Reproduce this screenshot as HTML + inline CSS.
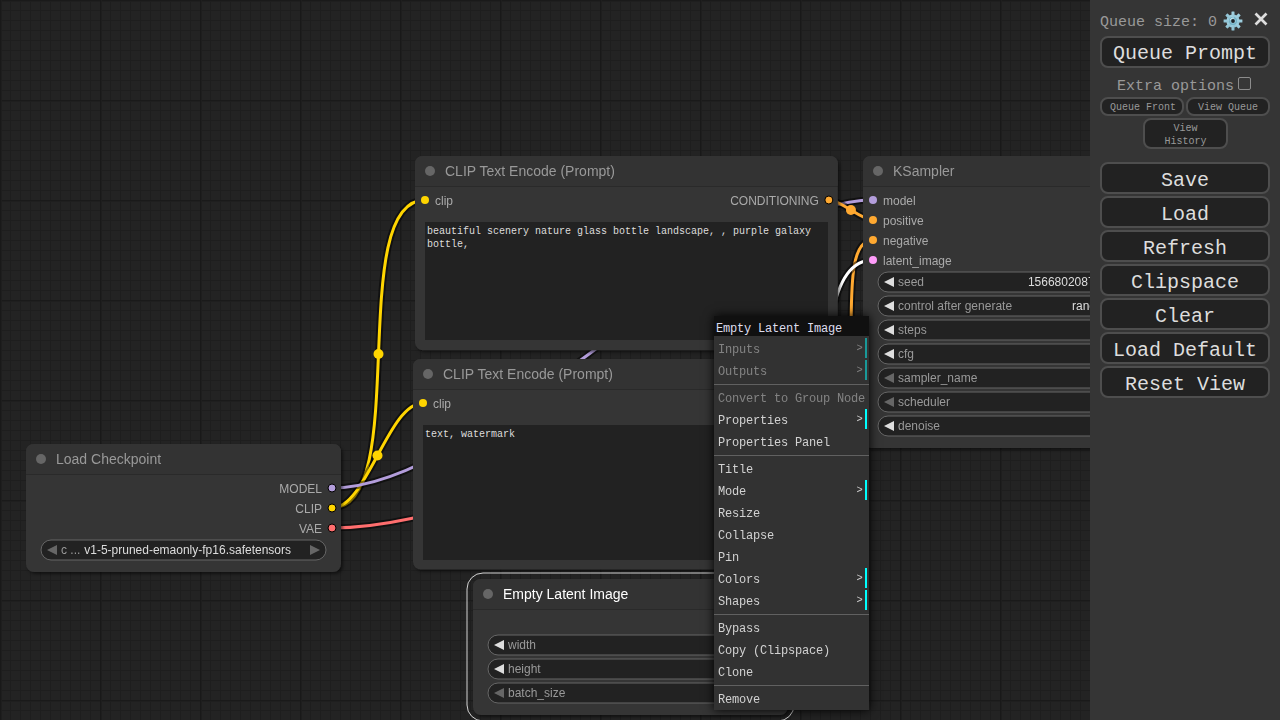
<!DOCTYPE html>
<html><head><meta charset="utf-8"><title>ComfyUI</title><style>
html,body{margin:0;padding:0;width:1280px;height:720px;overflow:hidden;background:#222}
#grid{position:absolute;left:0;top:0;width:1280px;height:720px;background-color:#232323;
background-image:
linear-gradient(to right, #191919 0, #191919 1px, #1e1e1e 1px, #1e1e1e 2px, transparent 2px),
linear-gradient(to bottom, #1a1a1a 0, #1a1a1a 1px, #1f1f1f 1px, #1f1f1f 2px, transparent 2px),
linear-gradient(to right, #1e1e1e 0, #1e1e1e 1px, transparent 1px),
linear-gradient(to bottom, #1e1e1e 0, #1e1e1e 1px, transparent 1px);
background-size:100px 100px,100px 100px,10px 10px,10px 10px;
background-position:0 0,0 0,0 0,0 0}
#cv{position:absolute;left:0;top:0;will-change:transform}
#cv text{font-family:"Liberation Sans", sans-serif}
.ta{position:absolute;background:#222;color:#ddd;font-family:"Liberation Mono", monospace;font-size:10px;line-height:13px;padding:3px 2px 2px 2px;box-sizing:border-box;overflow:hidden;word-wrap:break-word;white-space:pre-wrap}
#menu{position:absolute;left:714px;top:316px;width:155px;height:394px;background:#323232;box-shadow:0 0 10px #000;font-family:"Liberation Mono", monospace;font-size:12px;letter-spacing:-0.2px;overflow:hidden}
#menu .mt{height:20px;line-height:26.5px;background:#101010;color:#dde;padding-left:2px;white-space:nowrap}
#menu .me{position:relative;height:20px;line-height:25px;margin:2px;padding-left:2px;color:#d2d2d2;white-space:nowrap;box-sizing:border-box}
#menu .me.sub{border-right:2px solid cyan}
#menu .me.sub::after{content:">";position:absolute;right:2.3px;top:-0.9px;font-size:10.4px;letter-spacing:0;line-height:22px}
#menu .me.dis{opacity:0.5}
#menu .sep{height:0;border-top:1px solid #313131;border-bottom:1px solid #616161;margin:3px 0 2px 0}
#panel{position:absolute;left:1090px;top:0;width:190px;height:720px;background:#353535;font-family:"Liberation Mono", monospace;color:#999}
#panel .qs{position:absolute;left:10px;top:13px;font-size:15px;line-height:20px;white-space:nowrap}
#panel .gear{position:absolute;left:132.8px;top:10.5px}
#panel .close{position:absolute;left:164.4px;top:11.8px}
#panel .btn{position:absolute;box-sizing:border-box;border:2px solid #4e4e4e;background:#222;border-radius:8px;text-align:center;white-space:nowrap}
#panel .big{left:10px;width:170px;height:32px;font-size:20px;line-height:32px;color:#ddd}
#panel .big2{left:10px;width:170px;height:32px;font-size:20px;line-height:33px;color:#ddd}
#panel .sm{font-size:10px;line-height:18px;color:#999}
#panel .xo{position:absolute;left:27px;top:77.5px;font-size:15px;line-height:18px;white-space:nowrap}
#panel .cb{position:absolute;left:148px;top:77px;width:11px;height:11px;border:1px solid #8c8c8c;border-radius:2px;background:#373737}
</style></head>
<body>
<div id="grid"></div>
<svg id="cv" width="1280" height="720">
<defs><filter id="sh" x="-10%" y="-10%" width="120%" height="130%"><feDropShadow dx="2" dy="2" stdDeviation="1.5" flood-color="#000" flood-opacity="0.5"/></filter></defs>
<path d="M332 508 C412.43 508 344.57 200 425 200" stroke="rgba(0,0,0,0.5)" stroke-width="7" fill="none" stroke-linejoin="round"/>
<path d="M332 508 C412.43 508 344.57 200 425 200" stroke="#FFD500" stroke-width="3" fill="none"/>
<circle cx="378.5" cy="354" r="5" fill="#FFD500"/>
<path d="M332 508 C366.74 508 388.26 403 423 403" stroke="rgba(0,0,0,0.5)" stroke-width="7" fill="none" stroke-linejoin="round"/>
<path d="M332 508 C366.74 508 388.26 403 423 403" stroke="#FFD500" stroke-width="3" fill="none"/>
<circle cx="377.5" cy="455.5" r="5" fill="#FFD500"/>
<path d="M332 488 C485.22 488 719.78 200 873 200" stroke="rgba(0,0,0,0.5)" stroke-width="7" fill="none" stroke-linejoin="round"/>
<path d="M332 488 C485.22 488 719.78 200 873 200" stroke="#B39DDB" stroke-width="3" fill="none"/>
<circle cx="602.5" cy="344" r="5" fill="#B39DDB"/>
<path d="M332 528 C566.57 528 984.43 222 1219 222" stroke="rgba(0,0,0,0.5)" stroke-width="7" fill="none" stroke-linejoin="round"/>
<path d="M332 528 C566.57 528 984.43 222 1219 222" stroke="#FF6E6E" stroke-width="3" fill="none"/>
<circle cx="775.5" cy="375" r="5" fill="#FF6E6E"/>
<path d="M828.85 200 C840.97 200 860.88 220 873 220" stroke="rgba(0,0,0,0.5)" stroke-width="7" fill="none" stroke-linejoin="round"/>
<path d="M828.85 200 C840.97 200 860.88 220 873 220" stroke="#FFA931" stroke-width="3" fill="none"/>
<circle cx="850.92" cy="210" r="5" fill="#FFA931"/>
<path d="M829.27 403 C871.46 403 830.81 240 873 240" stroke="rgba(0,0,0,0.5)" stroke-width="7" fill="none" stroke-linejoin="round"/>
<path d="M829.27 403 C871.46 403 830.81 240 873 240" stroke="#FFA931" stroke-width="3" fill="none"/>
<circle cx="851.13" cy="321.5" r="5" fill="#FFA931"/>
<path d="M779 623 C872.74 623 779.26 260 873 260" stroke="rgba(0,0,0,0.5)" stroke-width="7" fill="none" stroke-linejoin="round"/>
<path d="M779 623 C872.74 623 779.26 260 873 260" stroke="#FFFFFF" stroke-width="3" fill="none"/>
<circle cx="826" cy="441.5" r="5" fill="#FFFFFF"/>
<g><rect x="863" y="156" width="315" height="292" rx="8" fill="#353535" filter="url(#sh)"/><rect x="863" y="185" width="315" height="2" fill="rgba(0,0,0,0.2)"/><path d="M863 164 Q863 156 871 156 H1170 Q1178 156 1178 164 V186 H863 Z" fill="#333"/><circle cx="878" cy="171" r="5" fill="#666"/><text x="893" y="176" font-size="14" fill="#999">KSampler</text><circle cx="873" cy="200" r="4" fill="#B39DDB"/><text x="883" y="205" font-size="12" fill="#AAA">model</text><circle cx="873" cy="220" r="4" fill="#FFA931"/><text x="883" y="225" font-size="12" fill="#AAA">positive</text><circle cx="873" cy="240" r="4" fill="#FFA931"/><text x="883" y="245" font-size="12" fill="#AAA">negative</text><circle cx="873" cy="260" r="4" fill="#FF9CF9"/><text x="883" y="265" font-size="12" fill="#AAA">latent_image</text><circle cx="1169" cy="200" r="4" fill="#FF9CF9" stroke="#000" stroke-width="1"/><text x="1159" y="205" font-size="12" fill="#AAA" text-anchor="end">LATENT</text><rect x="878" y="272" width="285" height="20" rx="10" fill="#222" stroke="#666" stroke-width="1"/><path d="M894 277 L884 282 L894 287 Z" fill="#DDD"/><text x="898" y="286" font-size="12" fill="#999">seed</text><text x="1128" y="286" font-size="12" fill="#DDD" text-anchor="end">156680208700286</text><rect x="878" y="296" width="285" height="20" rx="10" fill="#222" stroke="#666" stroke-width="1"/><path d="M894 301 L884 306 L894 311 Z" fill="#DDD"/><text x="898" y="310" font-size="12" fill="#999">control after generate</text><text x="1128" y="310" font-size="12" fill="#DDD" text-anchor="end">randomize</text><rect x="878" y="320" width="285" height="20" rx="10" fill="#222" stroke="#666" stroke-width="1"/><path d="M894 325 L884 330 L894 335 Z" fill="#DDD"/><text x="898" y="334" font-size="12" fill="#999">steps</text><text x="1128" y="334" font-size="12" fill="#DDD" text-anchor="end">20</text><rect x="878" y="344" width="285" height="20" rx="10" fill="#222" stroke="#666" stroke-width="1"/><path d="M894 349 L884 354 L894 359 Z" fill="#DDD"/><text x="898" y="358" font-size="12" fill="#999">cfg</text><text x="1128" y="358" font-size="12" fill="#DDD" text-anchor="end">8.0</text><rect x="878" y="368" width="285" height="20" rx="10" fill="#222" stroke="#666" stroke-width="1"/><path d="M894 373 L884 378 L894 383 Z" fill="#666"/><text x="898" y="382" font-size="12" fill="#999">sampler_name</text><text x="1128" y="382" font-size="12" fill="#DDD" text-anchor="end">euler</text><rect x="878" y="392" width="285" height="20" rx="10" fill="#222" stroke="#666" stroke-width="1"/><path d="M894 397 L884 402 L894 407 Z" fill="#666"/><text x="898" y="406" font-size="12" fill="#999">scheduler</text><text x="1128" y="406" font-size="12" fill="#DDD" text-anchor="end">normal</text><rect x="878" y="416" width="285" height="20" rx="10" fill="#222" stroke="#666" stroke-width="1"/><path d="M894 421 L884 426 L894 431 Z" fill="#DDD"/><text x="898" y="430" font-size="12" fill="#999">denoise</text><text x="1128" y="430" font-size="12" fill="#DDD" text-anchor="end">1.00</text></g>
<g><rect x="415" y="156" width="422.85" height="194.3" rx="8" fill="#353535" filter="url(#sh)"/><rect x="415" y="185" width="422.85" height="2" fill="rgba(0,0,0,0.2)"/><path d="M415 164 Q415 156 423 156 H829.85 Q837.85 156 837.85 164 V186 H415 Z" fill="#333"/><circle cx="430" cy="171" r="5" fill="#666"/><text x="445" y="176" font-size="14" fill="#999">CLIP Text Encode (Prompt)</text><circle cx="425" cy="200" r="4" fill="#FFD500"/><text x="435" y="205" font-size="12" fill="#AAA">clip</text><circle cx="828.85" cy="200" r="4" fill="#FFA931" stroke="#000" stroke-width="1"/><text x="818.85" y="205" font-size="12" fill="#AAA" text-anchor="end">CONDITIONING</text></g>
<g><rect x="413" y="359" width="425.27" height="210.6" rx="8" fill="#353535" filter="url(#sh)"/><rect x="413" y="388" width="425.27" height="2" fill="rgba(0,0,0,0.2)"/><path d="M413 367 Q413 359 421 359 H830.27 Q838.27 359 838.27 367 V389 H413 Z" fill="#333"/><circle cx="428" cy="374" r="5" fill="#666"/><text x="443" y="379" font-size="14" fill="#999">CLIP Text Encode (Prompt)</text><circle cx="423" cy="403" r="4" fill="#FFD500"/><text x="433" y="408" font-size="12" fill="#AAA">clip</text><circle cx="829.27" cy="403" r="4" fill="#FFA931" stroke="#000" stroke-width="1"/><text x="819.27" y="408" font-size="12" fill="#AAA" text-anchor="end">CONDITIONING</text></g>
<g><rect x="26" y="444" width="315" height="128" rx="8" fill="#353535" filter="url(#sh)"/><rect x="26" y="473" width="315" height="2" fill="rgba(0,0,0,0.2)"/><path d="M26 452 Q26 444 34 444 H333 Q341 444 341 452 V474 H26 Z" fill="#333"/><circle cx="41" cy="459" r="5" fill="#666"/><text x="56" y="464" font-size="14" fill="#999">Load Checkpoint</text><circle cx="332" cy="488" r="4" fill="#B39DDB" stroke="#000" stroke-width="1"/><text x="322" y="493" font-size="12" fill="#AAA" text-anchor="end">MODEL</text><circle cx="332" cy="508" r="4" fill="#FFD500" stroke="#000" stroke-width="1"/><text x="322" y="513" font-size="12" fill="#AAA" text-anchor="end">CLIP</text><circle cx="332" cy="528" r="4" fill="#FF6E6E" stroke="#000" stroke-width="1"/><text x="322" y="533" font-size="12" fill="#AAA" text-anchor="end">VAE</text><rect x="41" y="540" width="285" height="20" rx="10" fill="#222" stroke="#666" stroke-width="1"/><path d="M57 545 L47 550 L57 555 Z" fill="#666"/><path d="M310 545 L320 550 L310 555 Z" fill="#666"/><text x="61" y="554" font-size="12" fill="#999">c ...</text><text x="291" y="554" font-size="12" fill="#DDD" text-anchor="end">v1-5-pruned-emaonly-fp16.safetensors</text></g>
<g><rect x="473" y="579" width="315" height="136" rx="8" fill="#353535" filter="url(#sh)"/><rect x="473" y="608" width="315" height="2" fill="rgba(0,0,0,0.2)"/><path d="M473 587 Q473 579 481 579 H780 Q788 579 788 587 V609 H473 Z" fill="#333"/><circle cx="488" cy="594" r="5" fill="#666"/><text x="503" y="599" font-size="14" fill="#FFF">Empty Latent Image</text><circle cx="779" cy="623" r="4" fill="#FF9CF9" stroke="#000" stroke-width="1"/><text x="769" y="628" font-size="12" fill="#AAA" text-anchor="end">LATENT</text><rect x="488" y="635" width="285" height="20" rx="10" fill="#222" stroke="#666" stroke-width="1"/><path d="M504 640 L494 645 L504 650 Z" fill="#DDD"/><text x="508" y="649" font-size="12" fill="#999">width</text><text x="738" y="649" font-size="12" fill="#DDD" text-anchor="end">512</text><rect x="488" y="659" width="285" height="20" rx="10" fill="#222" stroke="#666" stroke-width="1"/><path d="M504 664 L494 669 L504 674 Z" fill="#DDD"/><text x="508" y="673" font-size="12" fill="#999">height</text><text x="738" y="673" font-size="12" fill="#DDD" text-anchor="end">512</text><rect x="488" y="683" width="285" height="20" rx="10" fill="#222" stroke="#666" stroke-width="1"/><path d="M504 688 L494 693 L504 698 Z" fill="#666"/><text x="508" y="697" font-size="12" fill="#999">batch_size</text><text x="738" y="697" font-size="12" fill="#DDD" text-anchor="end">1</text><rect x="467" y="573" width="327" height="148" rx="16" fill="none" stroke="#FFF" stroke-opacity="0.8" stroke-width="1"/></g>
</svg>
<div class="ta" style="left:425px;top:222px;width:402.85px;height:118.3px">beautiful scenery nature glass bottle landscape, , purple galaxy bottle,</div>
<div class="ta" style="left:423px;top:425px;width:405.27px;height:134.6px">text, watermark</div>
<div id="menu"><div class="mt">Empty Latent Image</div><div class="me dis sub">Inputs</div><div class="me dis sub">Outputs</div><div class="sep"></div><div class="me dis">Convert&nbsp;to&nbsp;Group&nbsp;Node</div><div class="me sub">Properties</div><div class="me ">Properties&nbsp;Panel</div><div class="sep"></div><div class="me ">Title</div><div class="me sub">Mode</div><div class="me ">Resize</div><div class="me ">Collapse</div><div class="me ">Pin</div><div class="me sub">Colors</div><div class="me sub">Shapes</div><div class="sep"></div><div class="me ">Bypass</div><div class="me ">Copy&nbsp;(Clipspace)</div><div class="me ">Clone</div><div class="sep"></div><div class="me ">Remove</div></div>
<div id="panel">
<div class="qs">Queue size: 0</div>
<svg class="gear" width="20" height="20" viewBox="0 0 20 20"><defs><linearGradient id="gg" x1="0" y1="0" x2="1" y2="1"><stop offset="0" stop-color="#a4d4e4"/><stop offset="1" stop-color="#8cbfd0"/></linearGradient></defs><g fill="url(#gg)"><circle cx="10" cy="10" r="6.6"/>
<rect x="8.5" y="0.6" width="3" height="18.8" rx="0.3"/>
<rect x="8.5" y="0.6" width="3" height="18.8" rx="0.3" transform="rotate(45 10 10)"/>
<rect x="8.5" y="0.6" width="3" height="18.8" rx="0.3" transform="rotate(90 10 10)"/>
<rect x="8.5" y="0.6" width="3" height="18.8" rx="0.3" transform="rotate(135 10 10)"/></g>
<circle cx="10" cy="10" r="3.4" fill="none" stroke="#6fb0c4" stroke-width="1.2"/>
<path d="M7.2 9.2 A3.2 3.2 0 0 1 10.8 6.9" stroke="#d8f0f8" stroke-width="0.9" fill="none"/>
<circle cx="10" cy="10" r="1.9" fill="#1c2226"/></svg>
<svg class="close" width="14" height="14" viewBox="0 0 14 14"><path d="M1.5 1.5 L12.5 12.5 M12.5 1.5 L1.5 12.5" stroke="#ddd" stroke-width="2.7"/></svg>
<div class="btn big" style="top:36px">Queue&nbsp;Prompt</div>
<div class="xo">Extra options</div><div class="cb"></div>
<div class="btn sm" style="left:10px;top:97px;width:84px;height:19px;padding-left:2px">Queue&nbsp;Front</div>
<div class="btn sm" style="left:96px;top:97px;width:84px;height:19px">View&nbsp;Queue</div>
<div class="btn sm" style="left:53px;top:118px;width:85px;height:31px;line-height:13px;padding-top:2px;box-sizing:border-box">View<br>History</div>
<div class="btn big2" style="top:162px">Save</div>
<div class="btn big2" style="top:196px">Load</div>
<div class="btn big2" style="top:230px">Refresh</div>
<div class="btn big2" style="top:264px">Clipspace</div>
<div class="btn big2" style="top:298px">Clear</div>
<div class="btn big2" style="top:332px">Load&nbsp;Default</div>
<div class="btn big2" style="top:366px">Reset&nbsp;View</div>
</div>
</body></html>
